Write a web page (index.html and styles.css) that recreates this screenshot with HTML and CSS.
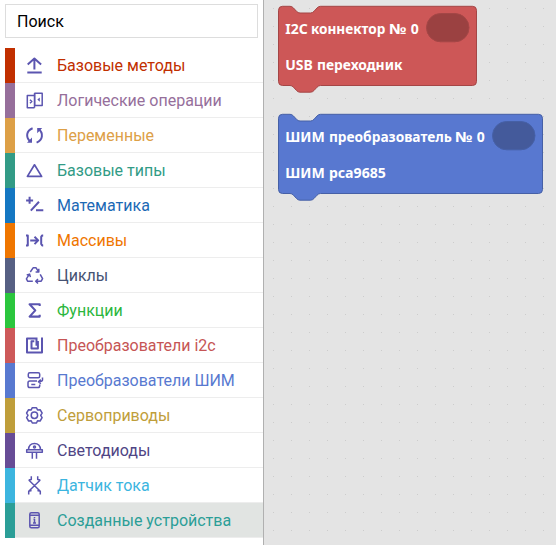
FILE: index.html
```html
<!DOCTYPE html>
<html lang="ru">
<head>
<meta charset="utf-8">
<title>Редактор блоков</title>
<link rel="stylesheet" href="styles.css">
</head>
<body>
<div class="app">
  <aside class="toolbox">
    <input class="search" type="text" placeholder="Поиск">
    <ul class="categories">
      <li class="category basic"><svg class="icon" viewBox="0 0 20 20"><path stroke-width="2" d="M9.4 14.5V4M2.7 9.4 9.4 3.6l6.7 5.8M2.3 17.5h14.4"/></svg><span>Базовые методы</span></li>
      <li class="category logic"><svg class="icon" viewBox="0 0 20 20"><path d="M9.5 5.6H2.3v12.2h7.2M9.8 3.3h7.4v12.2H9.8zM9.5 3.3v14.5M5 9.8l1.8 1.7L5 13.2"/><path class="solid" d="m14.8 7.5-2.5 2.1 2.5 2.1z"/></svg><span>Логические операции</span></li>
      <li class="category vars"><svg class="icon" viewBox="0 0 20 20"><path stroke-width="2" d="M7.6 3.2C1.2 5.6.5 12.2 5.2 16.6M11.6 17.6c6.2-2.5 7-9 2.4-13.3"/><path class="solid" d="M2 17.8h5v-5.2zM17.2 3h-5v5.2z"/></svg><span>Переменные</span></li>
      <li class="category types"><svg class="icon" viewBox="0 0 20 20"><path stroke-width="1.7" d="M9.5 4.8 2.4 16.4h14.2z"/></svg><span>Базовые типы</span></li>
      <li class="category math"><svg class="icon" viewBox="0 0 20 20"><path stroke-width="2" d="M4.6 1.8v7M1.1 5.4h7M14 6.8 5.8 15.6M11 15.3h7.3"/></svg><span>Математика</span></li>
      <li class="category arrays"><svg class="icon" viewBox="0 0 20 20"><path stroke-width="2" d="M1 5.4h1.8v10H1M5.2 10.4h8M9.5 6.7l3.7 3.7-3.7 3.7M18.2 5.4h-1l-1 1.5v7l1 1.5h1"/></svg><span>Массивы</span></li>
      <li class="category loops"><svg class="icon" viewBox="0 0 20 20"><path stroke-width="1.5" d="m5.3 7 2.8-4.2h3l2.3 3.8M13.8 3.8v3.3h-3.2M15.2 9.3l2.4 4.4-1.4 2.5h-5.4M13 14l-2.3 2.2 2.3 2.3M7.8 16.2H2.6l-1.2-2.3 3-4.7M1.7 9.9l2.9-.8.8 3"/></svg><span>Циклы</span></li>
      <li class="category funcs"><svg class="icon" viewBox="0 0 20 20"><path stroke-width="2.1" d="M14.7 6V4.300H4.600l5.700 6.100-5.700 6.200h10.100v-1.800"/></svg><span>Функции</span></li>
      <li class="category i2c"><svg class="icon" viewBox="0 0 20 20"><path stroke-width="2" d="M17 2.400v15H2v-14h10.500M11.500 3.400v7.400M12.900 6v7.600H6.500V6.200h2.800"/></svg><span>Преобразователи i2c</span></li>
      <li class="category pwm"><svg class="icon" viewBox="0 0 20 20"><rect x="3.300" y="2.700" width="11.400" height="5" rx="1.500"/><path d="M12 11H4.800q-1.800 0-1.800 1.800v3q0 1.800 1.800 1.800h8.200q1.700 0 1.700-1.800v-1.300M6.300 14.400h4M17.500 7.500v2.600q0 1.700-3.900 1.700M15.800 9.600l-2.400 2.100 2.400 2.100"/></svg><span>Преобразователи ШИМ</span></li>
      <li class="category servo"><svg class="icon" viewBox="0 0 20 20"><circle cx="9.400" cy="10.300" r="3.200"/><path d="M7.300 2.700h4.200l1 2.200 2.600-.2 2 3.300-1.400 2.300 1.400 2.300-2 3.400-2.600-.3-1 2.300H7.300l-1.100-2.300-2.600.3-2-3.400L3 10.300 1.600 8l2-3.300 2.600.2z"/></svg><span>Сервоприводы</span></li>
      <li class="category leds"><svg class="icon" viewBox="0 0 20 20"><path d="M3.500 9.600c.3-4 2.700-6 6-6s5.700 2 6 6M1.700 9.700h15.600v2.500H1.700zM7.300 12.500v6.200M11.500 12.500v6.200"/><circle cx="9.500" cy="7" r="1"/></svg><span>Светодиоды</span></li>
      <li class="category current"><svg class="icon" viewBox="0 0 20 20"><path d="M3.700 5 15.300 16.200M15.300 5 3.700 16.200M6.300 1.200v3.400L3.700 5M12.700 1.200v3.400l2.600.4M3.700 19.500v-3.300l2.900-.7M15.300 19.500v-3.300l-2.900-.7"/></svg><span>Датчик тока</span></li>
      <li class="category devices selected"><svg class="icon" viewBox="0 0 20 20"><rect x="4.800" y="2.700" width="9.400" height="15" rx="1.500"/><path d="M5 5.300h9M5 15.200h9M9.500 7v1M8.500 9.300h1v3.500M8 13h3"/></svg><span>Созданные устройства</span></li>
    </ul>
  </aside>
  <main class="workspace">
    <svg class="canvas" width="292" height="545" viewBox="264 0 292 545">
      <defs><pattern id="grid" x="273" y="8" width="18" height="18" patternUnits="userSpaceOnUse"><rect class="dot" width="1" height="1"/></pattern></defs>
      <rect x="264" width="292" height="545" fill="url(#grid)"/>
      <g class="block connector">
        <path d="M282.500 6.300H290q2 0 3.500 1.700l3 3.300q1.500 1.700 3.500 1.700h10.500q2 0 3.500-1.700l3-3.300q1.500-1.700 3.500-1.700h152q4 0 4 4v71.200q0 4-4 4h-152q-2 0-3.500 1.700l-3 3.300q-1.500 1.700-3.500 1.700H300q-2 0-3.500-1.700l-3-3.300q-1.500-1.700-3.500-1.700h-7.500q-4 0-4-4V10.300q0-4 4-4z"/>
        <rect class="slot" x="426.500" y="13.500" width="42.500" height="28.300" rx="14.150"/>
        <text y="34"><tspan x="285.200">I2C</tspan> <tspan x="310.900" textLength="74.500" lengthAdjust="spacingAndGlyphs">коннектор</tspan> <tspan x="389" textLength="17.500" lengthAdjust="spacingAndGlyphs">№</tspan> <tspan x="410.700">0</tspan></text>
        <text y="70"><tspan x="285.200">USB</tspan> <tspan x="317" textLength="85.500" lengthAdjust="spacingAndGlyphs">переходник</tspan></text>
      </g>
      <g class="block converter" transform="translate(0 108)">
        <path d="M282.500 6.300H290q2 0 3.500 1.700l3 3.300q1.500 1.700 3.500 1.700h10.500q2 0 3.500-1.700l3-3.300q1.500-1.700 3.500-1.700h218q4 0 4 4v71.200q0 4-4 4h-218q-2 0-3.500 1.700l-3 3.300q-1.500 1.700-3.500 1.700H300q-2 0-3.500-1.700l-3-3.300q-1.500-1.700-3.500-1.700h-7.500q-4 0-4-4V10.300q0-4 4-4z"/>
        <rect class="slot" x="492.500" y="13.500" width="42.500" height="28.300" rx="14.150"/>
        <text y="34"><tspan x="285.200" textLength="39.500" lengthAdjust="spacingAndGlyphs">ШИМ</tspan> <tspan x="328.900" textLength="123" lengthAdjust="spacingAndGlyphs">преобразователь</tspan> <tspan x="455" textLength="17.500" lengthAdjust="spacingAndGlyphs">№</tspan> <tspan x="476.700">0</tspan></text>
        <text y="70"><tspan x="285.200" textLength="39.500" lengthAdjust="spacingAndGlyphs">ШИМ</tspan> <tspan x="328.900" textLength="57" lengthAdjust="spacingAndGlyphs">pca9685</tspan></text>
      </g>
    </svg>
  </main>
</div>
</body>
</html>
```
FILE: styles.css
```css
* { box-sizing: border-box; }
body { margin: 0; background: #fff; font-family: Roboto, "Liberation Sans", sans-serif; overflow: hidden; }
.app { display: flex; width: 556px; height: 545px; }
.toolbox { width: 264px; padding: 4px 0 0 5px; border-right: 1px solid #b0b0b0; }
.search { display: block; width: 253px; height: 34px; padding: 0 11px; border: 1px solid #ddd; font: 16px Roboto, "Liberation Sans", sans-serif; outline: none; }
.search::placeholder { color: #000; opacity: 1; }
.categories { list-style: none; margin: 10px 0 0; padding: 0; }
.category { display: flex; align-items: center; height: 35px; padding-left: 20px; font-size: 16px; line-height: 34px; white-space: nowrap; color: var(--label); background: linear-gradient(var(--bar), var(--bar)) 0 0 / 10px 100% no-repeat, linear-gradient(#ededed, #ededed) 0 100% / 100% 1px no-repeat; }
.category span { margin-left: 12px; }
.icon { width: 20px; height: 20px; flex: none; align-self: flex-start; margin-top: 7px; fill: none; stroke: #5b55b0; stroke-width: 1.5; stroke-linejoin: round; }
.icon .solid { fill: #5b55b0; stroke: none; }
.basic { --bar: #c12f00; --label: #c12f00; }
.logic { --bar: #966f9b; --label: #966f9b; }
.vars { --bar: #dda047; --label: #dda047; }
.types { --bar: #329b86; --label: #329b86; }
.math { --bar: #1477c2; --label: #1b69b5; }
.arrays { --bar: #ef7600; --label: #ef7600; }
.loops { --bar: #566083; --label: #465373; }
.funcs { --bar: #2bc63d; --label: #2bb63d; }
.i2c { --bar: #cd5959; --label: #c65555; }
.pwm { --bar: #5879d0; --label: #5879d0; }
.servo { --bar: #bf9e3b; --label: #bf9e3b; }
.leds { --bar: #674c96; --label: #4f4585; }
.current { --bar: #3cb5df; --label: #3cb5df; }
.devices { --bar: #2b9e97; --label: #2b9e97; }
.selected { background-color: #e1e4e2; }
.workspace { flex: 1; background: #e4e4e4; }
.canvas { display: block; }
.dot { fill: #ccc; }
.block { stroke-width: 1; }
.block text { font: bold 14px "Noto Sans", sans-serif; fill: #fff; stroke: none; }
.connector { fill: #cd5757; stroke: #a44646; }
.connector .slot { fill: #9b4141; stroke: #a44646; }
.converter { fill: #5878d0; stroke: #4660a6; }
.converter .slot { fill: #445a9b; stroke: #4660a6; }
```
